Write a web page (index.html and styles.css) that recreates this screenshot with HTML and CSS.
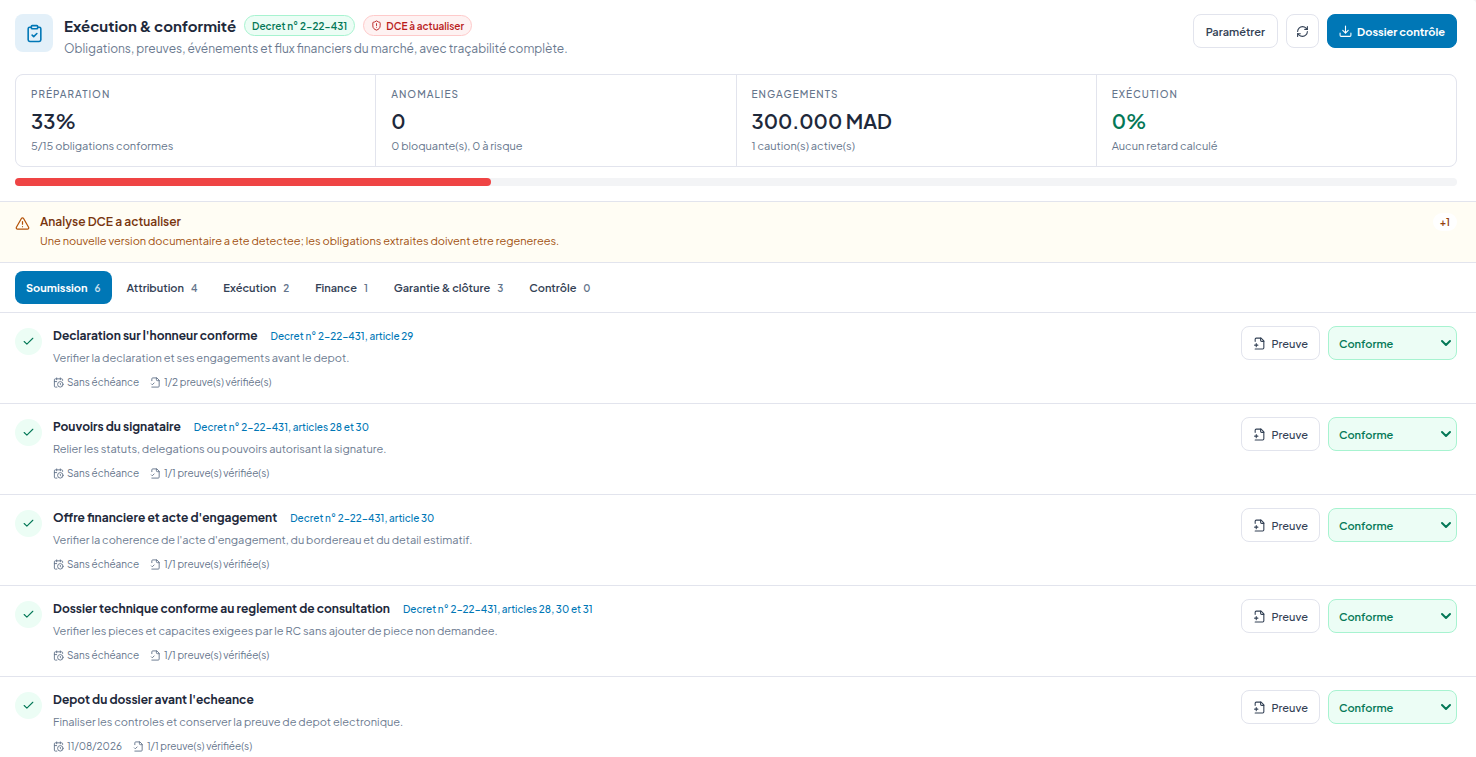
FILE: index.html
```html
<!DOCTYPE html>
<html lang="fr">
<head>
    <meta charset="UTF-8">
    <meta name="viewport" content="width=device-width, initial-scale=1.0">
    <title>Exécution &amp; conformité</title>
    <link rel="stylesheet" href="styles.css">
</head>
<body>
    <svg class="sprite" aria-hidden="true">
        <symbol id="i-clipboard" viewBox="0 0 24 24"><rect width="8" height="4" x="8" y="2" rx="1"/><path d="M16 4h2a2 2 0 0 1 2 2v14a2 2 0 0 1-2 2H6a2 2 0 0 1-2-2V6a2 2 0 0 1 2-2h2"/><path d="m9 14 2 2 4-4"/></symbol>
        <symbol id="i-shield" viewBox="0 0 24 24"><path d="M20 13c0 5-3.500 7.500-7.660 8.950a1 1 0 0 1-.67-.01C7.500 20.500 4 18 4 13V6a1 1 0 0 1 1-1c2 0 4.500-1.200 6.240-2.720a1.170 1.170 0 0 1 1.520 0C14.510 3.810 17 5 19 5a1 1 0 0 1 1 1z"/><path d="M12 8v4M12 16h.01"/></symbol>
        <symbol id="i-refresh" viewBox="0 0 24 24"><path d="M3 12a9 9 0 0 1 9-9 9.750 9.750 0 0 1 6.740 2.740L21 8"/><path d="M21 3v5h-5"/><path d="M21 12a9 9 0 0 1-9 9 9.750 9.750 0 0 1-6.740-2.740L3 16"/><path d="M8 16H3v5"/></symbol>
        <symbol id="i-download" viewBox="0 0 24 24"><path d="M22 15v4a2 2 0 0 1-2 2H4a2 2 0 0 1-2-2v-4"/><path d="m7 10 5 5 5-5M12 15V2"/></symbol>
        <symbol id="i-warning" viewBox="0 0 24 24"><path d="m21.730 18-8-14a2 2 0 0 0-3.480 0l-8 14A2 2 0 0 0 4 21h16a2 2 0 0 0 1.730-3"/><path d="M12 9v4M12 17h.01"/></symbol>
        <symbol id="i-check" viewBox="0 0 24 24"><path d="M20 6 9 17l-5-5"/></symbol>
        <symbol id="i-calendar" viewBox="0 0 24 24"><path d="M21 7.500V6a2 2 0 0 0-2-2H5a2 2 0 0 0-2 2v14a2 2 0 0 0 2 2h3.500"/><path d="M16 2v4M8 2v4M3 10h5"/><path d="M17.500 17.500 16 16.300V14"/><circle cx="16" cy="16" r="6"/></symbol>
        <symbol id="i-file-check" viewBox="0 0 24 24"><path d="M4 22h14a2 2 0 0 0 2-2V7l-5-5H6a2 2 0 0 0-2 2v4"/><path d="M14 2v4a2 2 0 0 0 2 2h4"/><path d="m3 15 2 2 4-4"/></symbol>
        <symbol id="i-file-plus" viewBox="0 0 24 24"><path d="M4 22h14a2 2 0 0 0 2-2V7l-5-5H6a2 2 0 0 0-2 2v4"/><path d="M14 2v4a2 2 0 0 0 2 2h4"/><path d="M3 15h6M6 12v6"/></symbol>
        <symbol id="i-chevron" viewBox="0 0 24 24"><path d="m4 8 8 8 8-8"/></symbol>
    </svg>

    <main class="panel">
        <header class="top">
            <div class="heading">
                <span class="logo"><svg class="icon icon-lg"><use href="#i-clipboard"/></svg></span>
                <div class="heading-text">
                    <div class="title-line">
                        <h1>Exécution &amp; conformité</h1>
                        <span class="pill pill-green">Decret n° 2-22-431</span>
                        <span class="pill pill-red"><svg class="icon icon-xs"><use href="#i-shield"/></svg>DCE à actualiser</span>
                    </div>
                    <p>Obligations, preuves, événements et flux financiers du marché, avec traçabilité complète.</p>
                </div>
                <div class="actions">
                    <button class="btn btn-strong" type="button">Paramétrer</button>
                    <button class="btn btn-icon" type="button" aria-label="Actualiser"><svg class="icon"><use href="#i-refresh"/></svg></button>
                    <button class="btn btn-primary" type="button"><svg class="icon"><use href="#i-download"/></svg>Dossier contrôle</button>
                </div>
            </div>

            <div class="stats">
                <div class="stat">
                    <span class="stat-label">Préparation</span>
                    <strong>33%</strong>
                    <span class="stat-note">5/15 obligations conformes</span>
                </div>
                <div class="stat">
                    <span class="stat-label">Anomalies</span>
                    <strong>0</strong>
                    <span class="stat-note">0 bloquante(s), 0 à risque</span>
                </div>
                <div class="stat">
                    <span class="stat-label">Engagements</span>
                    <strong>300.000 MAD</strong>
                    <span class="stat-note">1 caution(s) active(s)</span>
                </div>
                <div class="stat">
                    <span class="stat-label">Exécution</span>
                    <strong class="good">0%</strong>
                    <span class="stat-note">Aucun retard calculé</span>
                </div>
            </div>

            <div class="progress"><div class="progress-bar" style="width: 33%"></div></div>
        </header>

        <section class="alert">
            <svg class="icon"><use href="#i-warning"/></svg>
            <div class="alert-text">
                <h2>Analyse DCE a actualiser</h2>
                <p>Une nouvelle version documentaire a ete detectee; les obligations extraites doivent etre regenerees.</p>
            </div>
            <span class="more">+1</span>
        </section>

        <nav class="tabs">
            <button class="tab active" type="button">Soumission <span>6</span></button>
            <button class="tab" type="button">Attribution <span>4</span></button>
            <button class="tab" type="button">Exécution <span>2</span></button>
            <button class="tab" type="button">Finance <span>1</span></button>
            <button class="tab" type="button">Garantie &amp; clôture <span>3</span></button>
            <button class="tab" type="button">Contrôle <span>0</span></button>
        </nav>

        <ul class="obligations">
            <li class="row">
                <span class="status"><svg class="icon"><use href="#i-check"/></svg></span>
                <div class="row-text">
                    <div class="row-title"><h3>Declaration sur l'honneur conforme</h3><a href="#">Decret n° 2-22-431, article 29</a></div>
                    <p>Verifier la declaration et ses engagements avant le depot.</p>
                    <div class="meta">
                        <span><svg class="icon icon-xs"><use href="#i-calendar"/></svg>Sans échéance</span>
                        <span><svg class="icon icon-xs"><use href="#i-file-check"/></svg>1/2 preuve(s) vérifiée(s)</span>
                    </div>
                </div>
                <button class="btn" type="button"><svg class="icon"><use href="#i-file-plus"/></svg>Preuve</button>
                <div class="select">
                    <select aria-label="Statut : Declaration sur l'honneur"><option>Conforme</option></select>
                    <svg class="icon"><use href="#i-chevron"/></svg>
                </div>
            </li>
            <li class="row">
                <span class="status"><svg class="icon"><use href="#i-check"/></svg></span>
                <div class="row-text">
                    <div class="row-title"><h3>Pouvoirs du signataire</h3><a href="#">Decret n° 2-22-431, articles 28 et 30</a></div>
                    <p>Relier les statuts, delegations ou pouvoirs autorisant la signature.</p>
                    <div class="meta">
                        <span><svg class="icon icon-xs"><use href="#i-calendar"/></svg>Sans échéance</span>
                        <span><svg class="icon icon-xs"><use href="#i-file-check"/></svg>1/1 preuve(s) vérifiée(s)</span>
                    </div>
                </div>
                <button class="btn" type="button"><svg class="icon"><use href="#i-file-plus"/></svg>Preuve</button>
                <div class="select">
                    <select aria-label="Statut : Pouvoirs du signataire"><option>Conforme</option></select>
                    <svg class="icon"><use href="#i-chevron"/></svg>
                </div>
            </li>
            <li class="row">
                <span class="status"><svg class="icon"><use href="#i-check"/></svg></span>
                <div class="row-text">
                    <div class="row-title"><h3>Offre financiere et acte d'engagement</h3><a href="#">Decret n° 2-22-431, article 30</a></div>
                    <p>Verifier la coherence de l'acte d'engagement, du bordereau et du detail estimatif.</p>
                    <div class="meta">
                        <span><svg class="icon icon-xs"><use href="#i-calendar"/></svg>Sans échéance</span>
                        <span><svg class="icon icon-xs"><use href="#i-file-check"/></svg>1/1 preuve(s) vérifiée(s)</span>
                    </div>
                </div>
                <button class="btn" type="button"><svg class="icon"><use href="#i-file-plus"/></svg>Preuve</button>
                <div class="select">
                    <select aria-label="Statut : Offre financiere"><option>Conforme</option></select>
                    <svg class="icon"><use href="#i-chevron"/></svg>
                </div>
            </li>
            <li class="row">
                <span class="status"><svg class="icon"><use href="#i-check"/></svg></span>
                <div class="row-text">
                    <div class="row-title"><h3>Dossier technique conforme au reglement de consultation</h3><a href="#">Decret n° 2-22-431, articles 28, 30 et 31</a></div>
                    <p>Verifier les pieces et capacites exigees par le RC sans ajouter de piece non demandee.</p>
                    <div class="meta">
                        <span><svg class="icon icon-xs"><use href="#i-calendar"/></svg>Sans échéance</span>
                        <span><svg class="icon icon-xs"><use href="#i-file-check"/></svg>1/1 preuve(s) vérifiée(s)</span>
                    </div>
                </div>
                <button class="btn" type="button"><svg class="icon"><use href="#i-file-plus"/></svg>Preuve</button>
                <div class="select">
                    <select aria-label="Statut : Dossier technique"><option>Conforme</option></select>
                    <svg class="icon"><use href="#i-chevron"/></svg>
                </div>
            </li>
            <li class="row">
                <span class="status"><svg class="icon"><use href="#i-check"/></svg></span>
                <div class="row-text">
                    <div class="row-title"><h3>Depot du dossier avant l'echeance</h3></div>
                    <p>Finaliser les controles et conserver la preuve de depot electronique.</p>
                    <div class="meta">
                        <span><svg class="icon icon-xs"><use href="#i-calendar"/></svg>11/08/2026</span>
                        <span><svg class="icon icon-xs"><use href="#i-file-check"/></svg>1/1 preuve(s) vérifiée(s)</span>
                    </div>
                </div>
                <button class="btn" type="button"><svg class="icon"><use href="#i-file-plus"/></svg>Preuve</button>
                <div class="select">
                    <select aria-label="Statut : Depot du dossier"><option>Conforme</option></select>
                    <svg class="icon"><use href="#i-chevron"/></svg>
                </div>
            </li>
        </ul>
    </main>
</body>
</html>
```
FILE: styles.css
```css
* {
    box-sizing: border-box;
}

body {
    font-family: "Plus Jakarta Sans", Inter, sans-serif;
    font-size: 11px;
    line-height: 16px;
    margin: 0;
    background-color: #f3f4f6;
    color: #1e293b;
}

h1, h2, h3, p, ul {
    margin: 0;
    padding: 0;
}

button, select {
    font-family: inherit;
}

.sprite {
    display: none;
}

.icon {
    width: 13px;
    height: 13px;
    flex-shrink: 0;
    fill: none;
    stroke: currentColor;
    stroke-width: 2;
    stroke-linecap: round;
    stroke-linejoin: round;
}

.icon-lg {
    width: 19px;
    height: 19px;
}

.icon-xs {
    width: 11px;
    height: 11px;
}

.panel {
    min-height: 100vh;
    border-top-right-radius: 4px;
    background: #fff;
}

.top {
    padding: 14px 19px 15px 15px;
    border-bottom: 1px solid #e2e4ed;
}

.heading {
    display: flex;
    align-items: flex-start;
    gap: 11px;
}

.logo {
    display: flex;
    align-items: center;
    justify-content: center;
    width: 38px;
    height: 38px;
    border-radius: 8px;
    background: #e3f0f9;
    color: #0077b6;
}

.heading-text {
    flex: 1;
}

.title-line {
    display: flex;
    align-items: center;
    gap: 8px;
    height: 23px;
}

h1 {
    font-size: 15px;
    line-height: 23px;
    font-weight: 700;
}

.heading-text p {
    margin-top: 4px;
    font-size: 12px;
    color: #6b7a90;
}

.pill {
    display: flex;
    align-items: center;
    gap: 4px;
    height: 21px;
    padding: 0 7px;
    border: 1px solid;
    border-radius: 11px;
    font-size: 10px;
    font-weight: 600;
}

.pill-green {
    background: #ecfdf5;
    border-color: #a7f3d0;
    color: #047857;
}

.pill-red {
    background: #fef2f2;
    border-color: #fecaca;
    color: #b91c1c;
}

.actions {
    display: flex;
    gap: 8px;
}

.btn {
    display: flex;
    align-items: center;
    justify-content: center;
    gap: 5px;
    height: 34px;
    padding: 0 11px;
    border: 1px solid #e2e4ed;
    border-radius: 8px;
    background: #fff;
    color: #334155;
    font-size: 11px;
    font-weight: 500;
    cursor: pointer;
}

.btn-strong {
    padding: 0 12px;
    font-weight: 600;
}

.btn-icon {
    width: 33px;
    padding: 0;
}

.btn-primary {
    background: #0077b6;
    border-color: #0077b6;
    color: #fff;
    font-weight: 700;
}

.stats {
    display: grid;
    grid-template-columns: repeat(4, 1fr);
    gap: 1px;
    margin-top: 17px;
    border: 1px solid #e2e4ed;
    border-radius: 8px;
    background: #e2e4ed;
    overflow: hidden;
}

.stat {
    display: flex;
    flex-direction: column;
    padding: 11px 15px 12px;
    background: #fff;
}

.stat-label {
    font-size: 10px;
    font-weight: 500;
    letter-spacing: 1px;
    text-transform: uppercase;
    color: #64748b;
}

.stat strong {
    margin: 5px 0 4px;
    font-size: 20px;
    line-height: 27px;
    font-weight: 600;
}

.stat .good {
    color: #047857;
}

.stat-note {
    color: #64748b;
}

.progress {
    height: 8px;
    margin-top: 11px;
    border-radius: 4px;
    background: #f3f4f6;
}

.progress-bar {
    height: 8px;
    border-radius: 4px;
    background: #ef4444;
}

.alert {
    display: flex;
    align-items: flex-start;
    gap: 10px;
    padding: 11px 19px 13px 15px;
    border-bottom: 1px solid #e2e4ed;
    background: #fffdf4;
    color: #b45309;
}

.alert .icon {
    width: 15px;
    height: 15px;
    margin-top: 3px;
}

.alert-text {
    flex: 1;
}

.alert h2 {
    font-size: 12px;
    line-height: 18px;
    font-weight: 600;
    color: #78350f;
}

.alert p {
    margin-top: 2px;
    color: #a1500f;
}

.more {
    padding: 1px 7px;
    border-radius: 9px;
    background: #fff;
    font-size: 10px;
    font-weight: 600;
    color: #92400e;
}

.tabs {
    display: flex;
    gap: 4px;
    padding: 8px 15px;
    border-bottom: 1px solid #e2e4ed;
}

.tab {
    height: 33px;
    padding: 0 11px;
    border: none;
    border-radius: 8px;
    background: none;
    color: #334155;
    font-size: 11px;
    font-weight: 600;
    cursor: pointer;
}

.tab span {
    margin-left: 5px;
    font-size: 10px;
    color: #64748b;
}

.tab.active {
    background: #0077b6;
    color: #fff;
    font-weight: 700;
}

.tab.active span {
    font-weight: 600;
    color: #c5dfee;
}

.obligations {
    list-style: none;
}

.row {
    display: flex;
    align-items: flex-start;
    gap: 8px;
    padding: 13px 19px 12px 15px;
    border-bottom: 1px solid #e2e4ed;
}

.row:last-child {
    border-bottom: none;
}

.status {
    display: flex;
    align-items: center;
    justify-content: center;
    width: 27px;
    height: 27px;
    margin: 2px 3px 0 0;
    border-radius: 50%;
    background: #ecfdf5;
    color: #047857;
}

.row-text {
    flex: 1;
}

.row-title {
    display: flex;
    align-items: center;
    gap: 13px;
}

h3 {
    font-size: 12px;
    line-height: 20px;
    font-weight: 700;
}

.row-title a {
    font-size: 10px;
    font-weight: 500;
    color: #0077b6;
    text-decoration: none;
}

.row-text p {
    margin-top: 4px;
    color: #6b7a90;
}

.meta {
    display: flex;
    gap: 11px;
    margin-top: 8px;
    padding-bottom: 1px;
    font-size: 10px;
    color: #64748b;
}

.meta span {
    display: flex;
    align-items: center;
    gap: 3px;
}

.select {
    position: relative;
    width: 129px;
}

.select select {
    appearance: none;
    width: 100%;
    height: 34px;
    padding: 0 10px;
    border: 1px solid #a7f3d0;
    border-radius: 8px;
    background: #ecfdf5;
    color: #047857;
    font-size: 11px;
    font-weight: 600;
}

/* arrow drawn over the select */
.select .icon {
    position: absolute;
    top: 11px;
    right: 5px;
    width: 12px;
    height: 12px;
    color: #047857;
    stroke-width: 4;
    pointer-events: none;
}
```
